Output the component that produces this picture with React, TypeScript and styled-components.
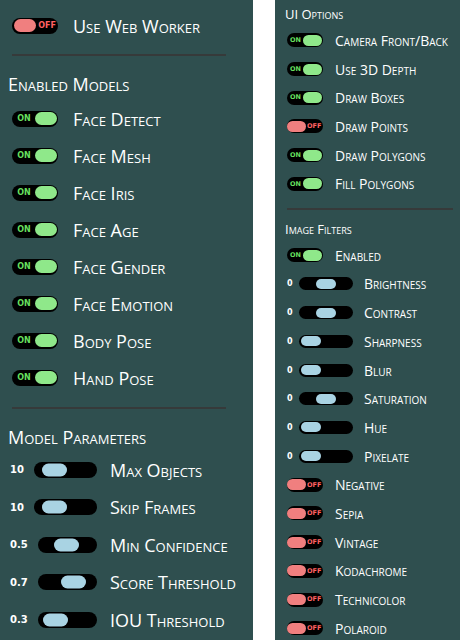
import React from "react";
import styled, { createGlobalStyle, css } from "styled-components";

type Size = "lg" | "sm";

const dims = {
  lg: {
    rowH: 37,
    sliderRowH: 37.5,
    labelFont: 18,
    headFont: 18,
    headPad: 8,
    rowPad: 12,
    gap: 15,
    tW: 46,
    tH: 16,
    kW: 22,
    kH: 13,
    tFont: 8,
    boxW: 87,
    boxGap: 10,
    trackH: 16,
    thumbW: 25,
    thumbH: 13,
    valFont: 10,
    sliderPad: 10,
    sliderLabelGap: 13,
    divL: 12,
    divR: 27,
  },
  sm: {
    rowH: 28.7,
    sliderRowH: 28.7,
    labelFont: 14,
    headFont: 13,
    headPad: 10,
    rowPad: 12,
    gap: 12,
    tW: 36,
    tH: 14,
    kW: 19,
    kH: 11,
    tFont: 6.5,
    boxW: 66,
    boxGap: 6,
    trackH: 13,
    thumbW: 20,
    thumbH: 10,
    valFont: 8,
    sliderPad: 12,
    sliderLabelGap: 11,
    divL: 12,
    divR: 7,
  },
};

const GlobalStyle = createGlobalStyle`
  html, body {
    margin: 0;
    padding: 0;
    background: #ffffff;
  }
  body {
    font-family: "Open Sans", "Lato", sans-serif;
  }
`;

const Page = styled.div`
  display: flex;
  gap: 22px;
  width: 460px;
  height: 640px;
  overflow: hidden;
`;

const Panel = styled.div<{ $w?: number; $pt: number }>`
  background: #2f4f4f;
  height: 640px;
  display: flex;
  flex-direction: column;
  padding-top: ${(p) => p.$pt}px;
  box-sizing: border-box;
  overflow: hidden;
  ${(p) =>
    p.$w
      ? css`
          width: ${p.$w}px;
          flex: none;
        `
      : css`
          flex: 1;
        `}
`;

const Heading = styled.div<{ $s: Size; $mt?: number }>`
  height: 24px;
  line-height: 24px;
  margin-top: ${(p) => p.$mt ?? 0}px;
  padding-left: ${(p) => dims[p.$s].headPad}px;
  font-size: ${(p) => dims[p.$s].headFont}px;
  font-variant: small-caps;
  color: #ffffff;
  white-space: nowrap;
`;

const Divider = styled.div<{ $s: Size; $mt: number }>`
  height: 2px;
  background: #363a3a;
  margin: ${(p) => p.$mt}px ${(p) => dims[p.$s].divR}px 0 ${(p) => dims[p.$s].divL}px;
  flex: none;
`;

const Group = styled.div<{ $mt?: number }>`
  display: flex;
  flex-direction: column;
  margin-top: ${(p) => p.$mt ?? 0}px;
`;

const Row = styled.div<{ $s: Size }>`
  display: flex;
  align-items: center;
  height: ${(p) => dims[p.$s].rowH}px;
  padding-left: ${(p) => dims[p.$s].rowPad}px;
  gap: ${(p) => dims[p.$s].gap}px;
  flex: none;
`;

const Label = styled.span<{ $s: Size }>`
  font-size: ${(p) => dims[p.$s].labelFont}px;
  font-variant: small-caps;
  color: #ffffff;
  white-space: nowrap;
`;

const Switch = styled.div<{ $s: Size; $on: boolean }>`
  width: ${(p) => dims[p.$s].tW}px;
  height: ${(p) => dims[p.$s].tH}px;
  border-radius: ${(p) => dims[p.$s].tH / 2}px;
  background: #000000;
  display: flex;
  align-items: center;
  flex-direction: ${(p) => (p.$on ? "row" : "row-reverse")};
  padding: 0 1.5px;
  box-sizing: border-box;
  flex: none;
`;

const Knob = styled.span<{ $s: Size; $on: boolean }>`
  width: ${(p) => dims[p.$s].kW}px;
  height: ${(p) => dims[p.$s].kH}px;
  border-radius: ${(p) => dims[p.$s].kH / 2}px;
  background: ${(p) => (p.$on ? "#8fe88a" : "#f07f7f")};
  flex: none;
`;

const SwitchText = styled.span<{ $s: Size; $on: boolean }>`
  flex: 1;
  text-align: center;
  font-family: "DejaVu Sans", "Open Sans", sans-serif;
  font-weight: 700;
  font-size: ${(p) => dims[p.$s].tFont}px;
  line-height: 1;
  color: ${(p) => (p.$on ? "#66df5e" : "#ff6262")};
  ${(p) =>
    !p.$on &&
    css`
      padding-left: ${p.$s === "lg" ? 2 : 1}px;
    `}
`;

const Toggle: React.FC<{ s: Size; on: boolean }> = ({ s, on }) => (
  <Switch $s={s} $on={on}>
    <SwitchText $s={s} $on={on}>
      {on ? "ON" : "OFF"}
    </SwitchText>
    <Knob $s={s} $on={on} />
  </Switch>
);

const ToggleRow: React.FC<{ s: Size; on: boolean; label: string }> = ({
  s,
  on,
  label,
}) => (
  <Row $s={s}>
    <Toggle s={s} on={on} />
    <Label $s={s}>{label}</Label>
  </Row>
);

const SliderRowWrap = styled.div<{ $s: Size }>`
  display: flex;
  align-items: center;
  height: ${(p) => dims[p.$s].sliderRowH}px;
  padding-left: ${(p) => dims[p.$s].sliderPad}px;
  gap: ${(p) => dims[p.$s].sliderLabelGap}px;
  flex: none;
`;

const SliderBox = styled.div<{ $s: Size }>`
  display: flex;
  align-items: center;
  width: ${(p) => dims[p.$s].boxW}px;
  gap: ${(p) => dims[p.$s].boxGap}px;
  flex: none;
`;

const Value = styled.span<{ $s: Size }>`
  font-family: "DejaVu Sans", "Open Sans", sans-serif;
  font-weight: 700;
  font-size: ${(p) => dims[p.$s].valFont}px;
  color: #ffffff;
  flex: none;
`;

const Track = styled.div<{ $s: Size }>`
  position: relative;
  flex: 1;
  height: ${(p) => dims[p.$s].trackH}px;
  border-radius: ${(p) => dims[p.$s].trackH / 2}px;
  background: #000000;
`;

const Thumb = styled.span<{ $s: Size }>`
  position: absolute;
  top: 50%;
  transform: translateY(-50%);
  width: ${(p) => dims[p.$s].thumbW}px;
  height: ${(p) => dims[p.$s].thumbH}px;
  border-radius: ${(p) => dims[p.$s].thumbH / 2}px;
  background: #a9d3e3;
`;

const SliderRow: React.FC<{
  s: Size;
  value: string;
  pos: number;
  label: string;
}> = ({ s, value, pos, label }) => {
  const tw = dims[s].thumbW;
  return (
    <SliderRowWrap $s={s}>
      <SliderBox $s={s}>
        <Value $s={s}>{value}</Value>
        <Track $s={s}>
          <Thumb
            $s={s}
            style={{ left: `calc(2px + ${pos} * (100% - ${tw + 4}px))` }}
          />
        </Track>
      </SliderBox>
      <Label $s={s}>{label}</Label>
    </SliderRowWrap>
  );
};

const models = [
  "Face Detect",
  "Face Mesh",
  "Face Iris",
  "Face Age",
  "Face Gender",
  "Face Emotion",
  "Body Pose",
  "Hand Pose",
];

const params = [
  { value: "10", pos: 0.17, label: "Max Objects" },
  { value: "10", pos: 0.17, label: "Skip Frames" },
  { value: "0.5", pos: 0.48, label: "Min Confidence" },
  { value: "0.7", pos: 0.7, label: "Score Threshold" },
  { value: "0.3", pos: 0.1, label: "IOU Threshold" },
];

const uiOptions = [
  { on: true, label: "Camera Front/Back" },
  { on: true, label: "Use 3D Depth" },
  { on: true, label: "Draw Boxes" },
  { on: false, label: "Draw Points" },
  { on: true, label: "Draw Polygons" },
  { on: true, label: "Fill Polygons" },
];

const filters = [
  { pos: 0.5, label: "Brightness" },
  { pos: 0.5, label: "Contrast" },
  { pos: 0, label: "Sharpness" },
  { pos: 0, label: "Blur" },
  { pos: 0.5, label: "Saturation" },
  { pos: 0, label: "Hue" },
  { pos: 0, label: "Pixelate" },
];

const effects = [
  "Negative",
  "Sepia",
  "Vintage",
  "Kodachrome",
  "Technicolor",
  "Polaroid",
];

export default function App() {
  return (
    <>
      <GlobalStyle />
      <Page>
        <Panel $w={253} $pt={7}>
          <ToggleRow s="lg" on={false} label="Use Web Worker" />
          <Divider $s="lg" $mt={10} />
          <Heading $s="lg" $mt={16}>
            Enabled Models
          </Heading>
          <Group $mt={4}>
            {models.map((m) => (
              <ToggleRow key={m} s="lg" on label={m} />
            ))}
          </Group>
          <Divider $s="lg" $mt={11} />
          <Heading $s="lg" $mt={16}>
            Model Parameters
          </Heading>
          <Group $mt={2}>
            {params.map((p) => (
              <SliderRow key={p.label} s="lg" {...p} />
            ))}
          </Group>
        </Panel>
        <Panel $pt={2}>
          <Heading $s="sm">UI Options</Heading>
          <Group>
            {uiOptions.map((o) => (
              <ToggleRow key={o.label} s="sm" on={o.on} label={o.label} />
            ))}
          </Group>
          <Divider $s="sm" $mt={9.5} />
          <Heading $s="sm" $mt={7.3}>
            Image Filters
          </Heading>
          <Group>
            <ToggleRow s="sm" on label="Enabled" />
            {filters.map((f) => (
              <SliderRow key={f.label} s="sm" value="0" {...f} />
            ))}
            {effects.map((e) => (
              <ToggleRow key={e} s="sm" on={false} label={e} />
            ))}
          </Group>
        </Panel>
      </Page>
    </>
  );
}
